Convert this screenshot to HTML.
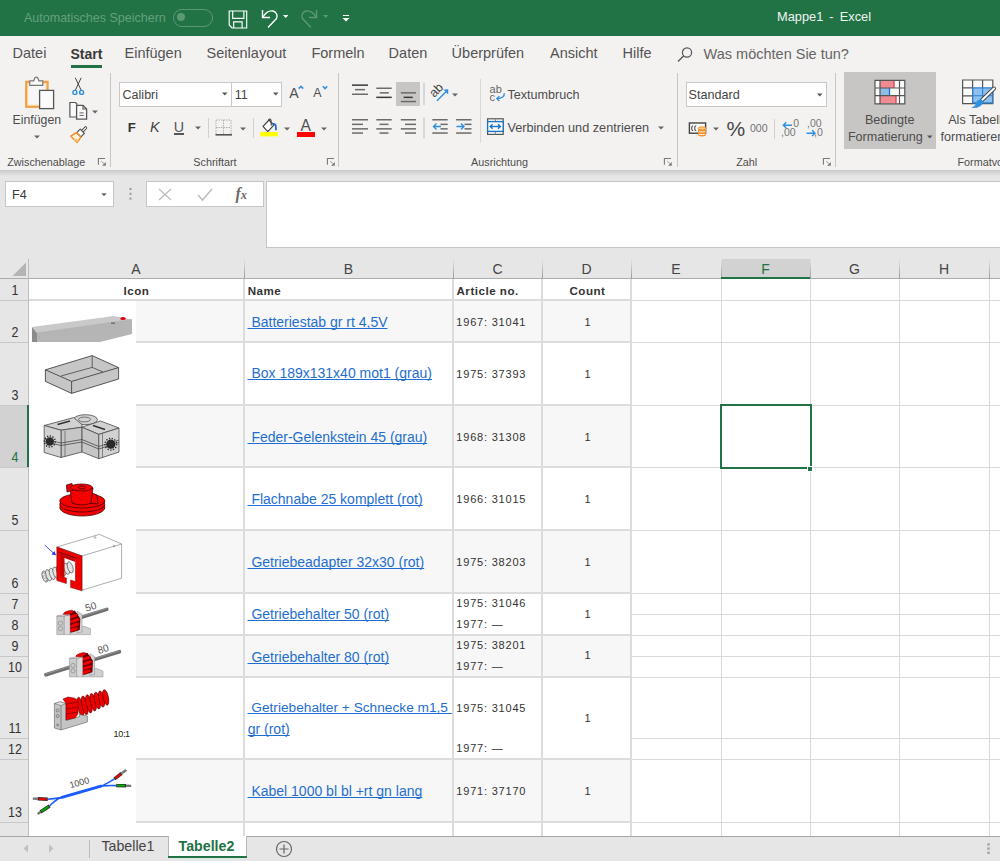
<!DOCTYPE html>
<html><head><meta charset="utf-8"><title>Excel</title>
<style>
html,body{margin:0;padding:0;}
body{width:1000px;height:861px;overflow:hidden;position:relative;background:#fff;font-family:'Liberation Sans', sans-serif;}
.t{position:absolute;white-space:nowrap;font-family:'Liberation Sans', sans-serif;}
svg{overflow:visible}
</style></head><body>
<div style="position:absolute;left:0px;top:0px;width:1000px;height:36px;background:#217346"></div><div class="t" style="left:24px;top:11.92px;font-size:12.5px;line-height:12.5px;color:#64a07c;font-weight:normal;letter-spacing:0px;">Automatisches Speichern</div><div style="position:absolute;left:173px;top:8.5px;width:38px;height:16px;border:1px solid #5d9876;border-radius:9px"></div><div style="position:absolute;left:177px;top:13px;width:8px;height:8px;background:#5d9876;border-radius:50%"></div><svg style="position:absolute;left:228px;top:10px" width="20" height="20" viewBox="0 0 20 20"><path d="M1.2 1H18.7V18H4L1.2 15Z" fill="none" stroke="#fff" stroke-width="1.15"/><path d="M4.7 1V8.3H15.9V1" fill="none" stroke="#fff" stroke-width="1.15"/><path d="M5.7 18V11.8H14.1V18" fill="none" stroke="#fff" stroke-width="1.15"/></svg><svg style="position:absolute;left:259px;top:8px" width="22" height="22" viewBox="0 0 22 22"><path d="M3.5 2V9.5H11" fill="none" stroke="#fff" stroke-width="1.4"/><path d="M4 9C7 4 11 2.5 14 3C17.5 4 19 7.5 17.5 10.5L9 19.5" fill="none" stroke="#fff" stroke-width="1.4"/></svg><svg style="position:absolute;left:283.4px;top:15px" width="6" height="4" viewBox="0 0 6 4"><path d="M0 0h5.4l-2.7 3z" fill="#fff"/></svg><svg style="position:absolute;left:298px;top:8px" width="22" height="22" viewBox="0 0 22 22"><path d="M18.5 2V9.5H11" fill="none" stroke="#5d9876" stroke-width="1.4"/><path d="M18 9C15 4 11 2.5 8 3C4.5 4 3 7.5 4.5 10.5L13 19.5" fill="none" stroke="#5d9876" stroke-width="1.4"/></svg><svg style="position:absolute;left:322.5px;top:15px" width="6" height="4" viewBox="0 0 6 4"><path d="M0 0h5.4l-2.7 3z" fill="#5d9876"/></svg><svg style="position:absolute;left:342px;top:14px" width="8" height="8" viewBox="0 0 8 8"><path d="M1 1.5h6" stroke="#fff" stroke-width="1"/><path d="M0.5 4h7l-3.5 3.5z" fill="#fff"/></svg><div class="t" style="left:777px;top:10.86px;font-size:12.8px;line-height:12.8px;color:#eef4f0;font-weight:normal;letter-spacing:0px;word-spacing:-0.5px">Mappe1 &nbsp;-&nbsp; Excel</div><div style="position:absolute;left:0px;top:36px;width:1000px;height:134px;background:#f3f2f1"></div><div class="t" style="left:12.5px;top:46.23px;font-size:14.5px;line-height:14.5px;color:#535353;font-weight:normal;letter-spacing:0px;">Datei</div><div class="t" style="left:70.5px;top:46.65px;font-size:14px;line-height:14px;color:#3a3a3a;font-weight:bold;letter-spacing:0px;">Start</div><div class="t" style="left:124.5px;top:46.23px;font-size:14.5px;line-height:14.5px;color:#535353;font-weight:normal;letter-spacing:0px;">Einfügen</div><div class="t" style="left:206.5px;top:46.23px;font-size:14.5px;line-height:14.5px;color:#535353;font-weight:normal;letter-spacing:0px;">Seitenlayout</div><div class="t" style="left:311.4px;top:46.23px;font-size:14.5px;line-height:14.5px;color:#535353;font-weight:normal;letter-spacing:0px;">Formeln</div><div class="t" style="left:388.6px;top:46.23px;font-size:14.5px;line-height:14.5px;color:#535353;font-weight:normal;letter-spacing:0px;">Daten</div><div class="t" style="left:451.6px;top:46.23px;font-size:14.5px;line-height:14.5px;color:#535353;font-weight:normal;letter-spacing:0px;">Überprüfen</div><div class="t" style="left:550px;top:46.23px;font-size:14.5px;line-height:14.5px;color:#535353;font-weight:normal;letter-spacing:0px;">Ansicht</div><div class="t" style="left:622.5px;top:46.23px;font-size:14.5px;line-height:14.5px;color:#535353;font-weight:normal;letter-spacing:0px;">Hilfe</div><div style="position:absolute;left:70.5px;top:64.5px;width:31.5px;height:3px;background:#217346"></div><svg style="position:absolute;left:677px;top:47px" width="16" height="15" viewBox="0 0 16 15"><circle cx="10" cy="5.5" r="4.6" fill="none" stroke="#555" stroke-width="1.2"/><path d="M6.8 8.8 L1 14.5" stroke="#555" stroke-width="1.3"/></svg><div class="t" style="left:703.6px;top:46.53px;font-size:14.5px;line-height:14.5px;color:#656565;font-weight:normal;letter-spacing:0px;">Was möchten Sie tun?</div><div style="position:absolute;left:110px;top:73px;width:1px;height:94px;background:#c8c6c4"></div><div style="position:absolute;left:338px;top:73px;width:1px;height:94px;background:#c8c6c4"></div><div style="position:absolute;left:676.5px;top:73px;width:1px;height:94px;background:#c8c6c4"></div><div style="position:absolute;left:834.5px;top:73px;width:1px;height:94px;background:#c8c6c4"></div><div class="t" style="left:7.2px;top:156.96px;font-size:10.8px;line-height:10.8px;color:#4d4d4d;font-weight:normal;letter-spacing:0px;">Zwischenablage</div><div class="t" style="left:193.3px;top:156.96px;font-size:10.8px;line-height:10.8px;color:#4d4d4d;font-weight:normal;letter-spacing:0px;">Schriftart</div><div class="t" style="left:471.1px;top:156.96px;font-size:10.8px;line-height:10.8px;color:#4d4d4d;font-weight:normal;letter-spacing:0px;">Ausrichtung</div><div class="t" style="left:736.2px;top:156.96px;font-size:10.8px;line-height:10.8px;color:#4d4d4d;font-weight:normal;letter-spacing:0px;">Zahl</div><div class="t" style="left:957.5px;top:156.96px;font-size:10.8px;line-height:10.8px;color:#4d4d4d;font-weight:normal;letter-spacing:0px;">Formatvorlagen</div><svg style="position:absolute;left:97px;top:157px" width="10" height="10" viewBox="0 0 10 10"><path d="M1.4 7.7V1.5H8" fill="none" stroke="#7a7a7a" stroke-width="1.1"/><path d="M4.4 4.2L7 6.8" stroke="#8a8a8a" stroke-width="0.9"/><path d="M8.8 5V8.7H5.1Z" fill="#7a7a7a"/></svg><svg style="position:absolute;left:325.5px;top:157px" width="10" height="10" viewBox="0 0 10 10"><path d="M1.4 7.7V1.5H8" fill="none" stroke="#7a7a7a" stroke-width="1.1"/><path d="M4.4 4.2L7 6.8" stroke="#8a8a8a" stroke-width="0.9"/><path d="M8.8 5V8.7H5.1Z" fill="#7a7a7a"/></svg><svg style="position:absolute;left:662.5px;top:157px" width="10" height="10" viewBox="0 0 10 10"><path d="M1.4 7.7V1.5H8" fill="none" stroke="#7a7a7a" stroke-width="1.1"/><path d="M4.4 4.2L7 6.8" stroke="#8a8a8a" stroke-width="0.9"/><path d="M8.8 5V8.7H5.1Z" fill="#7a7a7a"/></svg><svg style="position:absolute;left:821.5px;top:157px" width="10" height="10" viewBox="0 0 10 10"><path d="M1.4 7.7V1.5H8" fill="none" stroke="#7a7a7a" stroke-width="1.1"/><path d="M4.4 4.2L7 6.8" stroke="#8a8a8a" stroke-width="0.9"/><path d="M8.8 5V8.7H5.1Z" fill="#7a7a7a"/></svg><svg style="position:absolute;left:24px;top:76px" width="32" height="34" viewBox="0 0 32 34"><rect x="2.3" y="5.9" width="21.2" height="24.8" fill="#f7f7f7" stroke="#f2a04a" stroke-width="2.4"/><rect x="3.8" y="7.4" width="18.2" height="21.8" fill="none" stroke="#fbd98a" stroke-width="0.8"/><path d="M5.8 9.3V4.8H9.8C10.3 2.3 11 1.2 12.3 1.2S14.3 2.3 14.8 4.8H18.8V9.3Z" fill="#fafafa" stroke="#7a7a7a" stroke-width="1.2"/><rect x="15.6" y="14.4" width="14" height="18.2" fill="#fafafa" stroke="#555" stroke-width="1.3"/></svg><div class="t" style="left:12.6px;top:113.59px;font-size:12.3px;line-height:12.3px;color:#4d4d4d;font-weight:normal;letter-spacing:0px;">Einfügen</div><svg style="position:absolute;left:33.6px;top:134.6px" width="6" height="4" viewBox="0 0 6 4"><path d="M0 0.5h6l-3.0 3z" fill="#666"/></svg><svg style="position:absolute;left:71px;top:77px" width="16" height="19" viewBox="0 0 16 19"><path d="M4.3 0.8L10.2 13.3M10.2 0.8L4.3 13.3" fill="none" stroke="#444" stroke-width="1"/><circle cx="3.9" cy="15.4" r="2" fill="none" stroke="#2f8fdf" stroke-width="1.4"/><circle cx="10.6" cy="15.4" r="2" fill="none" stroke="#2f8fdf" stroke-width="1.4"/></svg><svg style="position:absolute;left:69px;top:101px" width="20" height="20" viewBox="0 0 20 20"><path d="M0.9 1.5H6.5L7.8 2.8V16H0.9Z" fill="#fafafa" stroke="#555" stroke-width="1.2"/><path d="M7.6 4.4H14L17.6 8V18.2H7.6Z" fill="#fafafa" stroke="#555" stroke-width="1.3"/><path d="M14 4.4V8H17.6" fill="none" stroke="#555" stroke-width="1.1"/><path d="M10.5 11.9H14.7M10.5 14.4H14.7" stroke="#666" stroke-width="1"/></svg><svg style="position:absolute;left:92.4px;top:110.4px" width="6" height="4" viewBox="0 0 6 4"><path d="M0 0.5h6l-3.0 3z" fill="#666"/></svg><svg style="position:absolute;left:69px;top:126px" width="20" height="19" viewBox="0 0 20 19"><path d="M16.6 1.8L13.2 5.4" stroke="#555" stroke-width="3.2" stroke-linecap="round"/><path d="M16.6 1.8L13.2 5.4" stroke="#fafafa" stroke-width="1.2" stroke-linecap="round"/><polygon points="11.2,3.1 15.4,7.3 11.9,10.8 7.7,6.6" fill="#fafafa" stroke="#555" stroke-width="1.2" stroke-linejoin="round"/><polygon points="7.3,6.6 11.9,11.2 8.2,16.6 1.8,10.2" fill="#fdf3e0" stroke="#f08a24" stroke-width="1.4" stroke-linejoin="round"/><polygon points="4.5,13.2 8.2,16.6 9.8,14.2 6.5,12.5" fill="#f6c56a"/></svg><div style="position:absolute;left:119.4px;top:82px;width:163px;height:24.5px;background:#fff;border:1px solid #c8c8c8;box-sizing:border-box"></div><div style="position:absolute;left:230.5px;top:82px;width:1px;height:24.5px;background:#c8c8c8"></div><div class="t" style="left:122.6px;top:89.02px;font-size:12.5px;line-height:12.5px;color:#444;font-weight:normal;letter-spacing:0px;">Calibri</div><svg style="position:absolute;left:221.55px;top:92.4px" width="5.5" height="4" viewBox="0 0 5.5 4"><path d="M0 0.5h5.5l-2.75 3z" fill="#555"/></svg><div class="t" style="left:234.7px;top:89.02px;font-size:12.5px;line-height:12.5px;color:#444;font-weight:normal;letter-spacing:0px;">11</div><svg style="position:absolute;left:272.95px;top:92.4px" width="5.5" height="4" viewBox="0 0 5.5 4"><path d="M0 0.5h5.5l-2.75 3z" fill="#555"/></svg><div class="t" style="left:289.2px;top:85.78px;font-size:14.2px;line-height:14.2px;color:#505050;font-weight:normal;letter-spacing:0px;">A</div><svg style="position:absolute;left:297.6px;top:85.2px" width="7" height="5" viewBox="0 0 7 5"><path d="M0.8 3.6L3 1.3L5.2 3.6" fill="none" stroke="#2f8fdf" stroke-width="1.6"/></svg><div class="t" style="left:313.3px;top:87.30px;font-size:12.4px;line-height:12.4px;color:#505050;font-weight:normal;letter-spacing:0px;">A</div><svg style="position:absolute;left:321.6px;top:85.2px" width="7" height="5" viewBox="0 0 7 5"><path d="M0.8 1.3L3 3.6L5.2 1.3" fill="none" stroke="#2f8fdf" stroke-width="1.6"/></svg><div class="t" style="left:127.7px;top:120.63px;font-size:13.2px;line-height:13.2px;color:#333;font-weight:bold;letter-spacing:0px;">F</div><div class="t" style="left:150px;top:119.53px;font-size:14.5px;line-height:14.5px;color:#444;font-weight:normal;letter-spacing:0px;"><i>K</i></div><div class="t" style="left:173.8px;top:119.70px;font-size:14.3px;line-height:14.3px;color:#555;font-weight:normal;letter-spacing:0px;">U</div><div style="position:absolute;left:174px;top:133.2px;width:9.8px;height:1.6px;background:#555"></div><svg style="position:absolute;left:194.6px;top:126.19999999999999px" width="6" height="4" viewBox="0 0 6 4"><path d="M0 0.5h6l-3.0 3z" fill="#666"/></svg><div style="position:absolute;left:208.4px;top:118px;width:1px;height:20.4px;background:#d0d0d0"></div><svg style="position:absolute;left:215px;top:119px" width="18" height="18" viewBox="0 0 18 18"><path d="M1 1h15v15M1 1v15M8.5 1v14M1 8.5h15" fill="none" stroke="#b0b0b0" stroke-width="1" stroke-dasharray="1.5 1"/><rect x="0.5" y="15" width="16.5" height="1.6" fill="#555"/></svg><svg style="position:absolute;left:239.5px;top:126.5px" width="6" height="4" viewBox="0 0 6 4"><path d="M0 0.5h6l-3.0 3z" fill="#666"/></svg><div style="position:absolute;left:252.9px;top:118px;width:1px;height:20.4px;background:#d0d0d0"></div><svg style="position:absolute;left:259px;top:118px" width="20" height="20" viewBox="0 0 20 20"><path d="M4 8.4L10 2L14.8 7.2L8.8 13.6Z" fill="#fafafa" stroke="#444" stroke-width="1.2" stroke-linejoin="round"/><path d="M9.6 2.6C9.4 0.9 11.6 0.4 12 2.2L12.3 7.6" fill="none" stroke="#444" stroke-width="1.1"/><path d="M13.8 6.2C15.6 5.6 16.9 6.6 16.9 9.2V12.2" fill="none" stroke="#1f6fd0" stroke-width="1.8"/><rect x="1.2" y="14" width="17.6" height="4.4" fill="#ffff00"/></svg><svg style="position:absolute;left:283.7px;top:126.5px" width="6" height="4" viewBox="0 0 6 4"><path d="M0 0.5h6l-3.0 3z" fill="#666"/></svg><div class="t" style="left:300.6px;top:117.99px;font-size:15.6px;line-height:15.6px;color:#505050;font-weight:normal;letter-spacing:0px;">A</div><div style="position:absolute;left:297px;top:132px;width:17.6px;height:4.8px;background:#ff0000"></div><svg style="position:absolute;left:320.8px;top:126.5px" width="6" height="4" viewBox="0 0 6 4"><path d="M0 0.5h6l-3.0 3z" fill="#666"/></svg><div style="position:absolute;left:395.9px;top:82.3px;width:23.8px;height:23.4px;background:#c8c6c4"></div><svg style="position:absolute;left:340px;top:76px" width="100" height="40" viewBox="0 0 100 40"><rect x="12" y="8.4" width="16.0" height="1.5" fill="#3a3a3a"/><rect x="15" y="12.9" width="10.0" height="1.5" fill="#6b6b6b"/><rect x="12" y="17.5" width="16.0" height="1.5" fill="#6b6b6b"/><rect x="36.30000000000001" y="11.5" width="15.4" height="1.5" fill="#6b6b6b"/><rect x="39.80000000000001" y="16.1" width="9.1" height="1.5" fill="#6b6b6b"/><rect x="36.30000000000001" y="20.6" width="15.4" height="1.5" fill="#3a3a3a"/><rect x="60.80000000000001" y="16.1" width="15.2" height="1.5" fill="#6b6b6b"/><rect x="63.60000000000002" y="20.6" width="9.1" height="1.5" fill="#3a3a3a"/><rect x="60.80000000000001" y="24.8" width="15.2" height="1.5" fill="#6b6b6b"/></svg><div style="position:absolute;left:423.3px;top:83.3px;width:1.5px;height:21.5px;background:#d6d6d6"></div><div class="t" style="left:430.3px;top:83.8px;font-size:12.6px;line-height:13px;color:#444;transform:rotate(-45deg);transform-origin:7px 7px">ab</div><svg style="position:absolute;left:432px;top:85px" width="18" height="17" viewBox="0 0 18 17"><path d="M5 15.8L14 6.8" stroke="#2f8fdf" stroke-width="1.4"/><polygon points="11.4,4.4 16.3,4.3 16.2,9.4" fill="#2f8fdf"/></svg><svg style="position:absolute;left:451.5px;top:92.5px" width="6" height="4" viewBox="0 0 6 4"><path d="M0 0.5h6l-3.0 3z" fill="#666"/></svg><svg style="position:absolute;left:340px;top:110px" width="140" height="30" viewBox="0 0 140 30"><rect x="12.0" y="9.0" width="16.0" height="1.5" fill="#6b6b6b"/><rect x="12.0" y="13.6" width="11.0" height="1.5" fill="#6b6b6b"/><rect x="12.0" y="18.1" width="16.0" height="1.5" fill="#6b6b6b"/><rect x="12.0" y="22.3" width="11.0" height="1.5" fill="#6b6b6b"/><rect x="36.3" y="9.0" width="15.4" height="1.5" fill="#6b6b6b"/><rect x="39.5" y="13.6" width="9.0" height="1.5" fill="#6b6b6b"/><rect x="36.3" y="18.1" width="15.4" height="1.5" fill="#6b6b6b"/><rect x="39.5" y="22.3" width="9.0" height="1.5" fill="#6b6b6b"/><rect x="60.8" y="9.0" width="15.2" height="1.5" fill="#6b6b6b"/><rect x="65.0" y="13.6" width="11.0" height="1.5" fill="#6b6b6b"/><rect x="60.8" y="18.1" width="15.2" height="1.5" fill="#6b6b6b"/><rect x="65.0" y="22.3" width="11.0" height="1.5" fill="#6b6b6b"/><rect x="92.3" y="9.0" width="15.4" height="1.5" fill="#6b6b6b"/><rect x="100.5" y="13.6" width="7.2" height="1.5" fill="#6b6b6b"/><rect x="100.5" y="18.1" width="7.2" height="1.5" fill="#6b6b6b"/><rect x="92.3" y="22.3" width="15.4" height="1.5" fill="#6b6b6b"/><rect x="116.1" y="9.0" width="15.4" height="1.5" fill="#6b6b6b"/><rect x="124.5" y="13.6" width="7.0" height="1.5" fill="#6b6b6b"/><rect x="124.5" y="18.1" width="7.0" height="1.5" fill="#6b6b6b"/><rect x="116.1" y="22.3" width="15.4" height="1.5" fill="#6b6b6b"/></svg><div style="position:absolute;left:423.3px;top:117.6px;width:1.5px;height:20.8px;background:#d6d6d6"></div><svg style="position:absolute;left:432px;top:122px" width="10" height="9" viewBox="0 0 10 9"><path d="M9 4.5H1.5M4.5 1.5l-3 3 3 3" fill="none" stroke="#2f8fdf" stroke-width="1.4"/></svg><svg style="position:absolute;left:456px;top:122px" width="10" height="9" viewBox="0 0 10 9"><path d="M0.5 4.5H8M5 1.5l3 3-3 3" fill="none" stroke="#2f8fdf" stroke-width="1.4"/></svg><div style="position:absolute;left:479.5px;top:78.8px;width:1px;height:63.8px;background:#d8d8d8"></div><div class="t" style="left:489.6px;top:83.69px;font-size:11px;line-height:11px;color:#666;font-weight:normal;letter-spacing:0px;">ab</div><div class="t" style="left:489.6px;top:91.89px;font-size:11px;line-height:11px;color:#666;font-weight:normal;letter-spacing:0px;">c</div><svg style="position:absolute;left:495px;top:92px" width="11" height="10" viewBox="0 0 11 10"><path d="M9.2 1.2C9.8 4.5 7 6.5 2 6.6" fill="none" stroke="#2f8fdf" stroke-width="1.3"/><path d="M4.4 4.2L1.8 6.6 4.4 9" fill="none" stroke="#2f8fdf" stroke-width="1.3"/></svg><div class="t" style="left:507.4px;top:88.63px;font-size:12.6px;line-height:12.6px;color:#4d4d4d;font-weight:normal;letter-spacing:0px;">Textumbruch</div><svg style="position:absolute;left:487px;top:118px" width="17" height="17" viewBox="0 0 17 17"><rect x="0.6" y="0.8" width="15.6" height="15.6" fill="#fafafa" stroke="#555" stroke-width="1.2"/><path d="M8.4 0.8V3.4M8.4 13.5V16.4" stroke="#888" stroke-width="1"/><rect x="0.6" y="3.6" width="15.6" height="9.8" fill="#fff" stroke="#1f73c6" stroke-width="1.4"/><path d="M3.2 8.5H13.4M5.6 6.2L3.2 8.5 5.6 10.8M11 6.2L13.4 8.5 11 10.8" fill="none" stroke="#1f73c6" stroke-width="1.4"/></svg><div class="t" style="left:507.4px;top:121.65px;font-size:12.7px;line-height:12.7px;color:#4d4d4d;font-weight:normal;letter-spacing:0px;">Verbinden und zentrieren</div><svg style="position:absolute;left:658.4px;top:125.6px" width="6" height="4" viewBox="0 0 6 4"><path d="M0 0.5h6l-3.0 3z" fill="#666"/></svg><div style="position:absolute;left:685.5px;top:82.2px;width:141px;height:24.4px;background:#fff;border:1px solid #c8c8c8;box-sizing:border-box"></div><div class="t" style="left:688.6px;top:89.13px;font-size:12.6px;line-height:12.6px;color:#444;font-weight:normal;letter-spacing:0px;">Standard</div><svg style="position:absolute;left:816.85px;top:93.2px" width="5.5" height="4" viewBox="0 0 5.5 4"><path d="M0 0.5h5.5l-2.75 3z" fill="#555"/></svg><svg style="position:absolute;left:688px;top:122px" width="20" height="16" viewBox="0 0 20 16"><rect x="1.4" y="1" width="16.2" height="10.2" fill="#fafafa" stroke="#444" stroke-width="1.4"/><path d="M5.2 3.8C3.2 3.8 3.2 8.6 5.2 8.6M8.2 3.8C6.2 3.8 6.2 8.6 8.2 8.6" fill="none" stroke="#555" stroke-width="1.1"/><path d="M10 6.4V12.6C10 13.8 11.8 14.5 14 14.5S18 13.8 18 12.6V6.4Z" fill="#f08a24"/><ellipse cx="14" cy="6.4" rx="4" ry="1.6" fill="#f6c87a" stroke="#f08a24" stroke-width="0.8"/><path d="M10.8 9.4C11.5 10.2 16.5 10.2 17.2 9.4M10.8 12C11.5 12.8 16.5 12.8 17.2 12" fill="none" stroke="#fff" stroke-width="0.9"/></svg><svg style="position:absolute;left:712.5px;top:126.69999999999999px" width="6" height="4" viewBox="0 0 6 4"><path d="M0 0.5h6l-3.0 3z" fill="#666"/></svg><div class="t" style="left:726.6px;top:117.82px;font-size:21px;line-height:21px;color:#474747;font-weight:normal;letter-spacing:0px;">%</div><div class="t" style="left:749.9px;top:123.13px;font-size:10.6px;line-height:10.6px;color:#737373;font-weight:normal;letter-spacing:0px;">000</div><div style="position:absolute;left:773.8px;top:118.5px;width:1.2px;height:20.4px;background:#d0d0d0"></div><div class="t" style="left:789px;top:119px;font-size:10.5px;line-height:8px;color:#777;text-align:right;width:10px">0</div><div class="t" style="left:781px;top:128px;font-size:10.5px;line-height:8px;color:#777">,00</div><svg style="position:absolute;left:781.5px;top:120.5px" width="11" height="8" viewBox="0 0 11 8"><path d="M10 4.2H1.5M4.2 1.3L1.3 4.2 4.2 7.1" fill="none" stroke="#2f8fdf" stroke-width="1.4"/></svg><div class="t" style="left:807px;top:119px;font-size:10.5px;line-height:8px;color:#777">,00</div><div class="t" style="left:814px;top:128px;font-size:10.5px;line-height:8px;color:#777">,0</div><svg style="position:absolute;left:805.8px;top:128.5px" width="11" height="8" viewBox="0 0 11 8"><path d="M0.5 4.2H9M6.1 1.3L9 4.2 6.1 7.1" fill="none" stroke="#2f8fdf" stroke-width="1.4"/></svg><div style="position:absolute;left:843.6px;top:72.1px;width:92.7px;height:77.1px;background:#c8c6c4"></div><svg style="position:absolute;left:874px;top:79px" width="32" height="26" viewBox="0 0 32 26"><rect x="1" y="1.3" width="29.8" height="23.5" fill="#fafafa"/><rect x="6" y="1.3" width="14" height="7.7" fill="#f28a93"/><rect x="6" y="16.6" width="16" height="7.7" fill="#f28a93"/><rect x="6" y="9" width="9.5" height="7.6" fill="#8fbde8"/><path d="M20 1.3v7.7M22 16.6v7.7" stroke="#e04050" stroke-width="1.3"/><path d="M15.5 9v7.6" stroke="#1f6fd0" stroke-width="1.3"/><path d="M1 1.3h29.8v23.5H1zM1 9h29.8M1 16.6h29.8M6 1.3v23.5M25.5 1.3v23.5" fill="none" stroke="#555" stroke-width="1.2"/></svg><div class="t" style="left:864.9px;top:113.83px;font-size:12.6px;line-height:12.6px;color:#4d4d4d;font-weight:normal;letter-spacing:0px;">Bedingte</div><div class="t" style="left:847.9px;top:130.83px;font-size:12.6px;line-height:12.6px;color:#4d4d4d;font-weight:normal;letter-spacing:0px;">Formatierung</div><svg style="position:absolute;left:926.75px;top:135.3px" width="5.5" height="4" viewBox="0 0 5.5 4"><path d="M0 0.5h5.5l-2.75 3z" fill="#555"/></svg><svg style="position:absolute;left:962px;top:79px" width="38" height="31" viewBox="0 0 38 31"><rect x="0.6" y="1" width="30.2" height="23.7" fill="#fafafa"/><rect x="10.6" y="8.9" width="20.2" height="15" fill="#8cc0ee"/><path d="M0.6 1h30.2v23.7H0.6zM0.6 8.9h10M0.6 16.8h10M10.6 1v23.7M20.6 1v7.9M10.6 1h20.2" fill="none" stroke="#555" stroke-width="1.2"/><path d="M10.6 8.9h20.2v15H10.6zM10.6 16.8h20.2M20.6 8.9v15" fill="none" stroke="#2f7fd0" stroke-width="1.1"/><path d="M32 9.5L19.8 21.2" stroke="#444" stroke-width="4" stroke-linecap="round"/><path d="M32 9.5L19.8 21.2" stroke="#fafafa" stroke-width="2.2" stroke-linecap="round"/><path d="M19.5 20.2C16 20.2 13.6 23 13.2 26.2C12 27.4 10.5 28.3 8.8 28.6C13.5 29.6 19.5 28.6 21.3 23Z" fill="#2f8fdf"/></svg><div class="t" style="left:948.2px;top:113.83px;font-size:12.6px;line-height:12.6px;color:#4d4d4d;font-weight:normal;letter-spacing:0px;">Als Tabelle</div><div class="t" style="left:940.5px;top:130.83px;font-size:12.6px;line-height:12.6px;color:#4d4d4d;font-weight:normal;letter-spacing:0px;">formatieren</div><div style="position:absolute;left:0px;top:170px;width:1000px;height:6px;background:linear-gradient(#c9c9c9,#e6e6e6)"></div><div style="position:absolute;left:0px;top:176px;width:1000px;height:83px;background:#e6e6e6"></div><div style="position:absolute;left:5px;top:181px;width:109px;height:25.5px;background:#fff;border:1px solid #c6c6c6;box-sizing:border-box"></div><div class="t" style="left:12px;top:188.73px;font-size:12.6px;line-height:12.6px;color:#3a3a3a;font-weight:normal;letter-spacing:0px;">F4</div><svg style="position:absolute;left:100.5px;top:192.5px" width="7" height="4" viewBox="0 0 7 4"><path d="M0.3 0.3h5.4l-2.7 3z" fill="#666"/></svg><svg style="position:absolute;left:128.5px;top:187px" width="4" height="14" viewBox="0 0 4 14"><rect x="0.5" y="1" width="2" height="2" fill="#999"/><rect x="0.5" y="5.8" width="2" height="2" fill="#999"/><rect x="0.5" y="10.6" width="2" height="2" fill="#999"/></svg><div style="position:absolute;left:146px;top:181px;width:118px;height:26px;background:#fff;border:1px solid #c6c6c6;box-sizing:border-box"></div><svg style="position:absolute;left:158px;top:188px" width="14" height="13" viewBox="0 0 14 13"><path d="M1 1L13 12M13 1L1 12" stroke="#bdbdbd" stroke-width="1.3"/></svg><svg style="position:absolute;left:197px;top:188px" width="16" height="13" viewBox="0 0 16 13"><path d="M1 7l4.5 5L15 1" fill="none" stroke="#bdbdbd" stroke-width="1.5"/></svg><div class="t" style="left:235.5px;top:186.46px;font-size:16px;line-height:16px;color:#6a6a6a;font-weight:normal;letter-spacing:0px;"><i style="font-family:Liberation Serif;font-weight:bold">f</i><i style="font-family:Liberation Serif;font-size:12.5px;font-weight:bold">x</i></div><div style="position:absolute;left:266px;top:181px;width:740px;height:67px;background:#fff;border:1px solid #c6c6c6;box-sizing:border-box"></div><div style="position:absolute;left:0px;top:259px;width:1000px;height:577px;background:#fff"></div><div style="position:absolute;left:0px;top:259px;width:1000px;height:19px;background:#e6e6e6"></div><div style="position:absolute;left:0px;top:259px;width:28px;height:577px;background:#e6e6e6"></div><div style="position:absolute;left:721px;top:259px;width:89px;height:19px;background:#d2d2d2"></div><div style="position:absolute;left:0px;top:405px;width:28px;height:62px;background:#d2d2d2"></div><div style="position:absolute;left:29px;top:301px;width:602px;height:41px;background:#f7f7f7"></div><div style="position:absolute;left:29px;top:406px;width:602px;height:61px;background:#f7f7f7"></div><div style="position:absolute;left:29px;top:531px;width:602px;height:62px;background:#f7f7f7"></div><div style="position:absolute;left:29px;top:636px;width:602px;height:41px;background:#f7f7f7"></div><div style="position:absolute;left:29px;top:760px;width:602px;height:62px;background:#f7f7f7"></div><div style="position:absolute;left:721px;top:279px;width:1px;height:557px;background:#dadada"></div><div style="position:absolute;left:810px;top:279px;width:1px;height:557px;background:#dadada"></div><div style="position:absolute;left:899px;top:279px;width:1px;height:557px;background:#dadada"></div><div style="position:absolute;left:989px;top:279px;width:1px;height:557px;background:#dadada"></div><div style="position:absolute;left:632px;top:300px;width:368px;height:1px;background:#dadada"></div><div style="position:absolute;left:632px;top:342px;width:368px;height:1px;background:#dadada"></div><div style="position:absolute;left:632px;top:405px;width:368px;height:1px;background:#dadada"></div><div style="position:absolute;left:632px;top:467px;width:368px;height:1px;background:#dadada"></div><div style="position:absolute;left:632px;top:530px;width:368px;height:1px;background:#dadada"></div><div style="position:absolute;left:632px;top:593px;width:368px;height:1px;background:#dadada"></div><div style="position:absolute;left:632px;top:614px;width:368px;height:1px;background:#dadada"></div><div style="position:absolute;left:632px;top:635px;width:368px;height:1px;background:#dadada"></div><div style="position:absolute;left:632px;top:656px;width:368px;height:1px;background:#dadada"></div><div style="position:absolute;left:632px;top:677px;width:368px;height:1px;background:#dadada"></div><div style="position:absolute;left:632px;top:738px;width:368px;height:1px;background:#dadada"></div><div style="position:absolute;left:632px;top:759px;width:368px;height:1px;background:#dadada"></div><div style="position:absolute;left:632px;top:822px;width:368px;height:1px;background:#dadada"></div><div style="position:absolute;left:0px;top:300px;width:28px;height:1px;background:#c8c8c8"></div><div style="position:absolute;left:0px;top:342px;width:28px;height:1px;background:#c8c8c8"></div><div style="position:absolute;left:0px;top:405px;width:28px;height:1px;background:#c8c8c8"></div><div style="position:absolute;left:0px;top:467px;width:28px;height:1px;background:#c8c8c8"></div><div style="position:absolute;left:0px;top:530px;width:28px;height:1px;background:#c8c8c8"></div><div style="position:absolute;left:0px;top:593px;width:28px;height:1px;background:#c8c8c8"></div><div style="position:absolute;left:0px;top:614px;width:28px;height:1px;background:#c8c8c8"></div><div style="position:absolute;left:0px;top:635px;width:28px;height:1px;background:#c8c8c8"></div><div style="position:absolute;left:0px;top:656px;width:28px;height:1px;background:#c8c8c8"></div><div style="position:absolute;left:0px;top:677px;width:28px;height:1px;background:#c8c8c8"></div><div style="position:absolute;left:0px;top:738px;width:28px;height:1px;background:#c8c8c8"></div><div style="position:absolute;left:0px;top:759px;width:28px;height:1px;background:#c8c8c8"></div><div style="position:absolute;left:0px;top:822px;width:28px;height:1px;background:#c8c8c8"></div><div style="position:absolute;left:244px;top:259px;width:1px;height:19px;background:linear-gradient(#e6e6e6,#9a9a9a)"></div><div style="position:absolute;left:453px;top:259px;width:1px;height:19px;background:linear-gradient(#e6e6e6,#9a9a9a)"></div><div style="position:absolute;left:542px;top:259px;width:1px;height:19px;background:linear-gradient(#e6e6e6,#9a9a9a)"></div><div style="position:absolute;left:631px;top:259px;width:1px;height:19px;background:linear-gradient(#e6e6e6,#9a9a9a)"></div><div style="position:absolute;left:721px;top:259px;width:1px;height:19px;background:linear-gradient(#e6e6e6,#9a9a9a)"></div><div style="position:absolute;left:810px;top:259px;width:1px;height:19px;background:linear-gradient(#e6e6e6,#9a9a9a)"></div><div style="position:absolute;left:899px;top:259px;width:1px;height:19px;background:linear-gradient(#e6e6e6,#9a9a9a)"></div><div style="position:absolute;left:989px;top:259px;width:1px;height:19px;background:linear-gradient(#e6e6e6,#9a9a9a)"></div><div style="position:absolute;left:29px;top:299px;width:603px;height:2px;background:#dcdcdc"></div><div style="position:absolute;left:29px;top:341px;width:603px;height:2px;background:#dcdcdc"></div><div style="position:absolute;left:29px;top:404px;width:603px;height:2px;background:#dcdcdc"></div><div style="position:absolute;left:29px;top:466px;width:603px;height:2px;background:#dcdcdc"></div><div style="position:absolute;left:29px;top:529px;width:603px;height:2px;background:#dcdcdc"></div><div style="position:absolute;left:29px;top:592px;width:603px;height:2px;background:#dcdcdc"></div><div style="position:absolute;left:29px;top:634px;width:603px;height:2px;background:#dcdcdc"></div><div style="position:absolute;left:29px;top:676px;width:603px;height:2px;background:#dcdcdc"></div><div style="position:absolute;left:29px;top:758px;width:603px;height:2px;background:#dcdcdc"></div><div style="position:absolute;left:29px;top:821px;width:603px;height:2px;background:#dcdcdc"></div><div style="position:absolute;left:243px;top:279px;width:2px;height:557px;background:#dcdcdc"></div><div style="position:absolute;left:452px;top:279px;width:2px;height:557px;background:#dcdcdc"></div><div style="position:absolute;left:541px;top:279px;width:2px;height:557px;background:#dcdcdc"></div><div style="position:absolute;left:630px;top:279px;width:2px;height:557px;background:#dcdcdc"></div><div style="position:absolute;left:0px;top:278px;width:1000px;height:1px;background:#ababab"></div><div style="position:absolute;left:28px;top:259px;width:1px;height:577px;background:#bdbdbd"></div><svg style="position:absolute;left:12px;top:262px" width="15" height="15" viewBox="0 0 15 15"><path d="M14 0.5V14H0.5Z" fill="#b4b4b4"/></svg><div style="position:absolute;left:721px;top:277px;width:89px;height:2px;background:#217346"></div><div style="position:absolute;left:27px;top:405px;width:2px;height:62px;background:#217346"></div><div class="t" style="left:28px;width:216px;text-align:center;top:262.05px;font-size:14px;line-height:14px;color:#444">A</div><div class="t" style="left:244px;width:209px;text-align:center;top:262.05px;font-size:14px;line-height:14px;color:#444">B</div><div class="t" style="left:453px;width:89px;text-align:center;top:262.05px;font-size:14px;line-height:14px;color:#444">C</div><div class="t" style="left:542px;width:89px;text-align:center;top:262.05px;font-size:14px;line-height:14px;color:#444">D</div><div class="t" style="left:631px;width:90px;text-align:center;top:262.05px;font-size:14px;line-height:14px;color:#444">E</div><div class="t" style="left:721px;width:89px;text-align:center;top:262.05px;font-size:14px;line-height:14px;color:#217346">F</div><div class="t" style="left:810px;width:89px;text-align:center;top:262.05px;font-size:14px;line-height:14px;color:#444">G</div><div class="t" style="left:899px;width:90px;text-align:center;top:262.05px;font-size:14px;line-height:14px;color:#444">H</div><div class="t" style="left:0.5px;width:28px;text-align:center;top:282.7px;font-size:14.5px;line-height:14.5px;color:#333;transform:scaleX(0.86)">1</div><div class="t" style="left:0.5px;width:28px;text-align:center;top:324.7px;font-size:14.5px;line-height:14.5px;color:#333;transform:scaleX(0.86)">2</div><div class="t" style="left:0.5px;width:28px;text-align:center;top:387.7px;font-size:14.5px;line-height:14.5px;color:#333;transform:scaleX(0.86)">3</div><div class="t" style="left:0.5px;width:28px;text-align:center;top:449.7px;font-size:14.5px;line-height:14.5px;color:#217346;transform:scaleX(0.86)">4</div><div class="t" style="left:0.5px;width:28px;text-align:center;top:512.7px;font-size:14.5px;line-height:14.5px;color:#333;transform:scaleX(0.86)">5</div><div class="t" style="left:0.5px;width:28px;text-align:center;top:575.7px;font-size:14.5px;line-height:14.5px;color:#333;transform:scaleX(0.86)">6</div><div class="t" style="left:0.5px;width:28px;text-align:center;top:596.7px;font-size:14.5px;line-height:14.5px;color:#333;transform:scaleX(0.86)">7</div><div class="t" style="left:0.5px;width:28px;text-align:center;top:617.7px;font-size:14.5px;line-height:14.5px;color:#333;transform:scaleX(0.86)">8</div><div class="t" style="left:0.5px;width:28px;text-align:center;top:638.7px;font-size:14.5px;line-height:14.5px;color:#333;transform:scaleX(0.86)">9</div><div class="t" style="left:0.5px;width:28px;text-align:center;top:659.7px;font-size:14.5px;line-height:14.5px;color:#333;transform:scaleX(0.86)">10</div><div class="t" style="left:0.5px;width:28px;text-align:center;top:720.7px;font-size:14.5px;line-height:14.5px;color:#333;transform:scaleX(0.86)">11</div><div class="t" style="left:0.5px;width:28px;text-align:center;top:741.7px;font-size:14.5px;line-height:14.5px;color:#333;transform:scaleX(0.86)">12</div><div class="t" style="left:0.5px;width:28px;text-align:center;top:804.7px;font-size:14.5px;line-height:14.5px;color:#333;transform:scaleX(0.86)">13</div><div class="t" style="left:76.5px;width:120px;text-align:center;top:284.98px;font-size:11.6px;line-height:11.6px;color:#333;font-weight:bold;letter-spacing:0.5px">Icon</div><div class="t" style="left:247.7px;top:284.98px;font-size:11.6px;line-height:11.6px;color:#333;font-weight:bold;letter-spacing:0.5px;">Name</div><div class="t" style="left:456.5px;top:284.98px;font-size:11.6px;line-height:11.6px;color:#333;font-weight:bold;letter-spacing:0.5px;">Article no.</div><div class="t" style="left:527.5px;width:120px;text-align:center;top:284.98px;font-size:11.6px;line-height:11.6px;color:#333;font-weight:bold;letter-spacing:0.5px">Count</div><div class="t" style="left:247.5px;top:315.05px;font-size:14px;line-height:14px;color:#1f6fd0;font-weight:normal;letter-spacing:0px;text-decoration:underline;text-underline-offset:1px;text-decoration-skip-ink:none">&nbsp;Batteriestab gr rt 4,5V</div><div class="t" style="left:456.3px;top:316.69px;font-size:11px;line-height:11px;color:#333;font-weight:normal;letter-spacing:0.8px;">1967: 31041</div><div class="t" style="left:567.5px;width:40px;text-align:center;top:316.69px;font-size:11px;line-height:11px;color:#333">1</div><div class="t" style="left:247.5px;top:366.45px;font-size:14px;line-height:14px;color:#1f6fd0;font-weight:normal;letter-spacing:0px;text-decoration:underline;text-underline-offset:1px;text-decoration-skip-ink:none">&nbsp;Box 189x131x40 mot1 (grau)</div><div class="t" style="left:456.3px;top:368.99px;font-size:11px;line-height:11px;color:#333;font-weight:normal;letter-spacing:0.8px;">1975: 37393</div><div class="t" style="left:567.5px;width:40px;text-align:center;top:368.99px;font-size:11px;line-height:11px;color:#333">1</div><div class="t" style="left:247.5px;top:429.65px;font-size:14px;line-height:14px;color:#1f6fd0;font-weight:normal;letter-spacing:0px;text-decoration:underline;text-underline-offset:1px;text-decoration-skip-ink:none">&nbsp;Feder-Gelenkstein 45 (grau)</div><div class="t" style="left:456.3px;top:431.99px;font-size:11px;line-height:11px;color:#333;font-weight:normal;letter-spacing:0.8px;">1968: 31308</div><div class="t" style="left:567.5px;width:40px;text-align:center;top:431.99px;font-size:11px;line-height:11px;color:#333">1</div><div class="t" style="left:247.5px;top:491.95px;font-size:14px;line-height:14px;color:#1f6fd0;font-weight:normal;letter-spacing:0px;text-decoration:underline;text-underline-offset:1px;text-decoration-skip-ink:none">&nbsp;Flachnabe 25 komplett (rot)</div><div class="t" style="left:456.3px;top:494.49px;font-size:11px;line-height:11px;color:#333;font-weight:normal;letter-spacing:0.8px;">1966: 31015</div><div class="t" style="left:567.5px;width:40px;text-align:center;top:494.49px;font-size:11px;line-height:11px;color:#333">1</div><div class="t" style="left:247.5px;top:554.85px;font-size:14px;line-height:14px;color:#1f6fd0;font-weight:normal;letter-spacing:0px;text-decoration:underline;text-underline-offset:1px;text-decoration-skip-ink:none">&nbsp;Getriebeadapter 32x30 (rot)</div><div class="t" style="left:456.3px;top:557.19px;font-size:11px;line-height:11px;color:#333;font-weight:normal;letter-spacing:0.8px;">1975: 38203</div><div class="t" style="left:567.5px;width:40px;text-align:center;top:557.19px;font-size:11px;line-height:11px;color:#333">1</div><div class="t" style="left:247.5px;top:607.25px;font-size:14px;line-height:14px;color:#1f6fd0;font-weight:normal;letter-spacing:0px;text-decoration:underline;text-underline-offset:1px;text-decoration-skip-ink:none">&nbsp;Getriebehalter 50 (rot)</div><div class="t" style="left:456.3px;top:597.99px;font-size:11px;line-height:11px;color:#333;font-weight:normal;letter-spacing:0.8px;">1975: 31046</div><div class="t" style="left:456.3px;top:618.89px;font-size:11px;line-height:11px;color:#333;font-weight:normal;letter-spacing:0.8px;">1977: &mdash;</div><div class="t" style="left:567.5px;width:40px;text-align:center;top:608.59px;font-size:11px;line-height:11px;color:#333">1</div><div class="t" style="left:247.5px;top:649.55px;font-size:14px;line-height:14px;color:#1f6fd0;font-weight:normal;letter-spacing:0px;text-decoration:underline;text-underline-offset:1px;text-decoration-skip-ink:none">&nbsp;Getriebehalter 80 (rot)</div><div class="t" style="left:456.3px;top:640.09px;font-size:11px;line-height:11px;color:#333;font-weight:normal;letter-spacing:0.8px;">1975: 38201</div><div class="t" style="left:456.3px;top:660.99px;font-size:11px;line-height:11px;color:#333;font-weight:normal;letter-spacing:0.8px;">1977: &mdash;</div><div class="t" style="left:567.5px;width:40px;text-align:center;top:650.39px;font-size:11px;line-height:11px;color:#333">1</div><div class="t" style="left:247.5px;top:701.30px;font-size:13.7px;line-height:13.7px;color:#1f6fd0;font-weight:normal;letter-spacing:0px;text-decoration:underline;text-underline-offset:1px;text-decoration-skip-ink:none">&nbsp;Getriebehalter + Schnecke m1,5&nbsp;</div><div class="t" style="left:247.7px;top:721.95px;font-size:14px;line-height:14px;color:#1f6fd0;font-weight:normal;letter-spacing:0px;text-decoration:underline;text-underline-offset:1px;text-decoration-skip-ink:none">gr (rot)</div><div class="t" style="left:456.3px;top:702.79px;font-size:11px;line-height:11px;color:#333;font-weight:normal;letter-spacing:0.8px;">1975: 31045</div><div class="t" style="left:456.3px;top:743.19px;font-size:11px;line-height:11px;color:#333;font-weight:normal;letter-spacing:0.8px;">1977: &mdash;</div><div class="t" style="left:567.5px;width:40px;text-align:center;top:713.09px;font-size:11px;line-height:11px;color:#333">1</div><div class="t" style="left:247.5px;top:784.15px;font-size:14px;line-height:14px;color:#1f6fd0;font-weight:normal;letter-spacing:0px;text-decoration:underline;text-underline-offset:1px;text-decoration-skip-ink:none">&nbsp;Kabel 1000 bl bl +rt gn lang</div><div class="t" style="left:456.3px;top:786.39px;font-size:11px;line-height:11px;color:#333;font-weight:normal;letter-spacing:0.8px;">1971: 37170</div><div class="t" style="left:567.5px;width:40px;text-align:center;top:786.39px;font-size:11px;line-height:11px;color:#333">1</div><div style="position:absolute;left:29px;top:300.5px;width:107px;height:535.5px;background:#fff"></div><svg style="position:absolute;left:29px;top:299px" width="107" height="537" viewBox="29 299 107 537"><polygon points="32,327 114,316 132,319.5 37,333" fill="#c9c9c9"/><polygon points="37,333 132,319.5 132,334 100,342 37,342" fill="#b5b5b5"/><polygon points="32,327 37,333 37,342 32,342" fill="#8c8c8c"/><line x1="37" y1="333" x2="132" y2="319.5" stroke="#a8a8a8" stroke-width="0.6"/><ellipse cx="123" cy="318.6" rx="2.8" ry="1.5" fill="#e0001a"/><rect x="111" y="322.5" width="4" height="1.3" fill="#666"/><polygon points="45.4,369.8 92.2,355.6 118.6,367.6 118.6,379 71.6,393.4 45.4,381.4" fill="#c6c6c6" stroke="#333" stroke-width="0.8" stroke-linejoin="round"/><polyline points="45.4,369.8 71.6,381.4 118.6,367.6" fill="none" stroke="#333" stroke-width="0.8"/><line x1="71.6" y1="381.4" x2="71.6" y2="393.4" stroke="#333" stroke-width="0.8"/><polyline points="61,376 92.2,367.4 103,372" fill="none" stroke="#333" stroke-width="0.7"/><line x1="92.2" y1="355.6" x2="92.2" y2="367.4" stroke="#333" stroke-width="0.7"/><ellipse cx="85.4" cy="419.7" rx="12" ry="5" fill="#d2d2d2" stroke="#4a4a4a" stroke-width="0.8"/><ellipse cx="84.5" cy="419.5" rx="6" ry="2.4" fill="none" stroke="#4a4a4a" stroke-width="0.7"/><polygon points="44.2,425.5 73.6,417.6 82,424.5 82,427.2 61,430.2" fill="#d2d2d2" stroke="#4a4a4a" stroke-width="0.8" stroke-linejoin="round"/><polygon points="61,430.2 82,427.2 82,452 61,457.5" fill="#c6c6c6" stroke="#4a4a4a" stroke-width="0.8"/><polygon points="44.2,425.5 61,430.2 61,457.5 44.2,452.5" fill="#d2d2d2" stroke="#4a4a4a" stroke-width="0.8"/><polyline points="44.2,439 61,443 82,439.5" fill="none" stroke="#4a4a4a" stroke-width="0.8"/><polyline points="44.2,441.5 61,445.5 82,442" fill="none" stroke="#4a4a4a" stroke-width="0.8"/><line x1="65" y1="431" x2="65" y2="456.5" stroke="#4a4a4a" stroke-width="0.6"/><line x1="57.5" y1="424.5" x2="70" y2="421" stroke="#333" stroke-width="1.6"/><polygon points="82,427.2 100.5,421 119,428 98.8,434.4" fill="#d2d2d2" stroke="#4a4a4a" stroke-width="0.8" stroke-linejoin="round"/><polygon points="82,427.2 98.8,434.4 98.8,458.7 82,452" fill="#c6c6c6" stroke="#4a4a4a" stroke-width="0.8"/><polygon points="98.8,434.4 119,428 119,452 98.8,458.7" fill="#d2d2d2" stroke="#4a4a4a" stroke-width="0.8"/><polyline points="82,439.5 98.8,446.5 119,440" fill="none" stroke="#4a4a4a" stroke-width="0.8"/><polyline points="82,442 98.8,449 119,442.5" fill="none" stroke="#4a4a4a" stroke-width="0.8"/><line x1="102.5" y1="433.5" x2="102.5" y2="457.5" stroke="#4a4a4a" stroke-width="0.6"/><line x1="93" y1="425.5" x2="105" y2="429.5" stroke="#333" stroke-width="1.6"/><circle cx="49.8" cy="441.5" r="4.2" fill="#2a2a2a"/><circle cx="49.8" cy="441.5" r="5.5" fill="none" stroke="#222" stroke-width="1.4" stroke-dasharray="1.2 1.6"/><circle cx="110.8" cy="444.2" r="4.6" fill="#2a2a2a"/><circle cx="110.8" cy="444.2" r="5.8999999999999995" fill="none" stroke="#222" stroke-width="1.4" stroke-dasharray="1.2 1.6"/><ellipse cx="82.3" cy="507.5" rx="22.5" ry="8.5" fill="#f40000" stroke="#3a0000" stroke-width="0.75"/><rect x="59.8" y="501" width="45" height="6.5" fill="#f40000"/><ellipse cx="82.3" cy="504.5" rx="22.5" ry="7.5" fill="none" stroke="#3a0000" stroke-width="0.75"/><ellipse cx="82.3" cy="500.8" rx="22.5" ry="7.2" fill="#f40000" stroke="#3a0000" stroke-width="0.75"/><polygon points="87,491 97,495 98,504 88,503" fill="#f40000" stroke="#3a0000" stroke-width="0.75"/><path d="M70 488 L72 503 Q82 507 91 503 L93 488 Z" fill="#f40000" stroke="#3a0000" stroke-width="0.75"/><polygon points="66.5,485 72,483.5 74,490 67,492" fill="#f40000" stroke="#3a0000" stroke-width="0.75"/><ellipse cx="81.5" cy="487.5" rx="11" ry="3.5" fill="#f40000" stroke="#3a0000" stroke-width="0.75"/><ellipse cx="82" cy="487.5" rx="3.5" ry="1.5" fill="none" stroke="#3a0000" stroke-width="0.75"/><polygon points="56.8,547 99.4,534.4 121.6,544 121.6,578.2 82,590.2 82,556" fill="#fff" stroke="#777" stroke-width="0.6"/><polyline points="56.8,547 82,556 121.6,544" fill="none" stroke="#777" stroke-width="0.6"/><circle cx="95" cy="537.5" r="0.9" fill="none" stroke="#777" stroke-width="0.5"/><circle cx="114" cy="546" r="0.9" fill="none" stroke="#777" stroke-width="0.5"/><ellipse cx="45.0" cy="576.5" rx="2.6" ry="5.8" transform="rotate(-18 45.0 576.5)" fill="#e4e4e4" stroke="#606060" stroke-width="0.75"/><ellipse cx="48.6" cy="575.2" rx="2.6" ry="5.8" transform="rotate(-18 48.6 575.2)" fill="#e4e4e4" stroke="#606060" stroke-width="0.75"/><ellipse cx="52.2" cy="573.9" rx="2.6" ry="5.8" transform="rotate(-18 52.2 573.9)" fill="#e4e4e4" stroke="#606060" stroke-width="0.75"/><ellipse cx="55.8" cy="572.6" rx="2.6" ry="5.8" transform="rotate(-18 55.8 572.6)" fill="#e4e4e4" stroke="#606060" stroke-width="0.75"/><ellipse cx="59.4" cy="571.3" rx="2.6" ry="5.8" transform="rotate(-18 59.4 571.3)" fill="#e4e4e4" stroke="#606060" stroke-width="0.75"/><ellipse cx="63.0" cy="570.0" rx="2.6" ry="5.8" transform="rotate(-18 63.0 570.0)" fill="#e4e4e4" stroke="#606060" stroke-width="0.75"/><ellipse cx="66.6" cy="568.7" rx="2.6" ry="5.8" transform="rotate(-18 66.6 568.7)" fill="#e4e4e4" stroke="#606060" stroke-width="0.75"/><ellipse cx="70.2" cy="567.4" rx="2.6" ry="5.8" transform="rotate(-18 70.2 567.4)" fill="#e4e4e4" stroke="#606060" stroke-width="0.75"/><ellipse cx="44.5" cy="577" rx="2" ry="4.5" transform="rotate(-18 44.5 577)" fill="#f6f6f6" stroke="#777" stroke-width="0.7"/><ellipse cx="44.5" cy="577" rx="0.9" ry="2" transform="rotate(-18 44.5 577)" fill="none" stroke="#777" stroke-width="0.5"/><path d="M56.8,547 L82,556 L82,590.8 L70.6,587.5 L70.6,580 L75.4,581.5 L75.4,559 L61,553.6 L61,576.5 L66.4,578 L66.4,583.6 L56.8,580.5 Z" fill="#ee0000" stroke="#8a0000" stroke-width="0.5"/><path d="M58.5,552 L75.5,558" stroke="#7a0000" stroke-width="1.3"/><polygon points="61,553.6 75.4,559 75.4,562 64.5,558 64.5,577.5 61,576.5" fill="#c80000"/><path d="M75.4,559 L82,556" stroke="#a00" stroke-width="0.5"/><line x1="44.8" y1="545.2" x2="54.5" y2="554" stroke="#2233ee" stroke-width="0.9"/><polygon points="56,555.3 51.5,554.5 54.5,551" fill="#2233ee"/><line x1="79.8" y1="617.8" x2="106.8" y2="609.4" stroke="#6e6e6e" stroke-width="3.6" stroke-linecap="round"/><line x1="79.8" y1="616.9" x2="106.8" y2="608.5" stroke="#9a9a9a" stroke-width="0.8"/><polygon points="70.0,626.8 83.8,626.2 90.4,628.6 90.4,634.6 70.0,634.6" fill="#d0d0d0" stroke="#8a8a8a" stroke-width="0.5"/><polygon points="77.2,611.4 82.0,614.2 82.0,632.0 77.2,633.0" fill="#d4d4d4" stroke="#8a8a8a" stroke-width="0.5"/><polygon points="64.8,613.0 74.8,610.5 80.3,618.5 79.8,630.0 71.3,632.5 68.8,620.0" fill="#6a0000"/><ellipse cx="68.3" cy="612.8" rx="5.2" ry="1.9" transform="rotate(-18 68.3 612.8)" fill="#f40000" stroke="#4a0000" stroke-width="0.4"/><ellipse cx="73.0" cy="616.2" rx="5.2" ry="1.9" transform="rotate(-18 73.0 616.2)" fill="#f40000" stroke="#4a0000" stroke-width="0.4"/><ellipse cx="74.6" cy="620.6" rx="5.2" ry="1.9" transform="rotate(-18 74.6 620.6)" fill="#f40000" stroke="#4a0000" stroke-width="0.4"/><ellipse cx="74.6" cy="625.2" rx="5.2" ry="1.9" transform="rotate(-18 74.6 625.2)" fill="#f40000" stroke="#4a0000" stroke-width="0.4"/><ellipse cx="73.3" cy="629.6" rx="5.2" ry="1.9" transform="rotate(-18 73.3 629.6)" fill="#f40000" stroke="#4a0000" stroke-width="0.4"/><polygon points="64.0,616.0 70.0,614.8 70.0,634.6 64.0,634.6" fill="#dadada" stroke="#8a8a8a" stroke-width="0.5"/><polygon points="56.8,616.0 64.0,616.0 64.0,634.6 56.8,634.6" fill="#cbcbcb" stroke="#8a8a8a" stroke-width="0.5"/><polygon points="56.8,616.0 62.8,614.7 70.0,614.8 64.0,616.0" fill="#e6e6e6" stroke="#8a8a8a" stroke-width="0.5"/><circle cx="60.4" cy="623.2" r="2.1" fill="none" stroke="#8a8a8a" stroke-width="0.7"/><circle cx="60.4" cy="628.6" r="2.1" fill="none" stroke="#8a8a8a" stroke-width="0.7"/><text x="84.8" y="610.4" font-family="Liberation Sans" font-size="10.2" fill="#555" transform="rotate(-16 90 606)">50</text><line x1="45.900000000000006" y1="674.8" x2="71.4" y2="666.8" stroke="#6e6e6e" stroke-width="3.6" stroke-linecap="round"/><line x1="45.900000000000006" y1="673.9" x2="71.4" y2="665.9" stroke="#9a9a9a" stroke-width="0.8"/><line x1="92.4" y1="660.0999999999999" x2="119.4" y2="651.6999999999999" stroke="#6e6e6e" stroke-width="3.6" stroke-linecap="round"/><line x1="92.4" y1="659.1999999999999" x2="119.4" y2="650.8" stroke="#9a9a9a" stroke-width="0.8"/><polygon points="82.6,669.1 96.4,668.5 103.0,670.9 103.0,676.9 82.6,676.9" fill="#d0d0d0" stroke="#8a8a8a" stroke-width="0.5"/><polygon points="89.8,653.7 94.6,656.5 94.6,674.3 89.8,675.3" fill="#d4d4d4" stroke="#8a8a8a" stroke-width="0.5"/><polygon points="77.4,655.3 87.4,652.8 92.9,660.8 92.4,672.3 83.9,674.8 81.4,662.3" fill="#6a0000"/><ellipse cx="80.9" cy="655.1" rx="5.2" ry="1.9" transform="rotate(-18 80.9 655.1)" fill="#f40000" stroke="#4a0000" stroke-width="0.4"/><ellipse cx="85.6" cy="658.5" rx="5.2" ry="1.9" transform="rotate(-18 85.6 658.5)" fill="#f40000" stroke="#4a0000" stroke-width="0.4"/><ellipse cx="87.2" cy="662.9" rx="5.2" ry="1.9" transform="rotate(-18 87.2 662.9)" fill="#f40000" stroke="#4a0000" stroke-width="0.4"/><ellipse cx="87.2" cy="667.5" rx="5.2" ry="1.9" transform="rotate(-18 87.2 667.5)" fill="#f40000" stroke="#4a0000" stroke-width="0.4"/><ellipse cx="85.9" cy="671.9" rx="5.2" ry="1.9" transform="rotate(-18 85.9 671.9)" fill="#f40000" stroke="#4a0000" stroke-width="0.4"/><polygon points="76.6,658.3 82.6,657.1 82.6,676.9 76.6,676.9" fill="#dadada" stroke="#8a8a8a" stroke-width="0.5"/><polygon points="69.4,658.3 76.6,658.3 76.6,676.9 69.4,676.9" fill="#cbcbcb" stroke="#8a8a8a" stroke-width="0.5"/><polygon points="69.4,658.3 75.4,657.0 82.6,657.1 76.6,658.3" fill="#e6e6e6" stroke="#8a8a8a" stroke-width="0.5"/><circle cx="73.0" cy="665.5" r="2.1" fill="none" stroke="#8a8a8a" stroke-width="0.7"/><circle cx="73.0" cy="670.9" r="2.1" fill="none" stroke="#8a8a8a" stroke-width="0.7"/><text x="97.3" y="652.8" font-family="Liberation Sans" font-size="10.2" fill="#555" transform="rotate(-16 102 648.5)">80</text><polygon points="80,701 104,692 106,700 81,713" fill="#5a0000"/><ellipse cx="80.5" cy="707.0" rx="2.7" ry="10.00" transform="rotate(-12 80.5 707.0)" fill="#ee0000" stroke="#4a0000" stroke-width="0.6"/><ellipse cx="84.7" cy="705.4" rx="2.7" ry="9.65" transform="rotate(-12 84.7 705.4)" fill="#ee0000" stroke="#4a0000" stroke-width="0.6"/><ellipse cx="88.9" cy="703.8" rx="2.7" ry="9.30" transform="rotate(-12 88.9 703.8)" fill="#ee0000" stroke="#4a0000" stroke-width="0.6"/><ellipse cx="93.1" cy="702.2" rx="2.7" ry="8.95" transform="rotate(-12 93.1 702.2)" fill="#ee0000" stroke="#4a0000" stroke-width="0.6"/><ellipse cx="97.3" cy="700.6" rx="2.7" ry="8.60" transform="rotate(-12 97.3 700.6)" fill="#ee0000" stroke="#4a0000" stroke-width="0.6"/><ellipse cx="101.5" cy="699.0" rx="2.7" ry="8.25" transform="rotate(-12 101.5 699.0)" fill="#ee0000" stroke="#4a0000" stroke-width="0.6"/><ellipse cx="105.7" cy="697.4" rx="2.7" ry="7.90" transform="rotate(-12 105.7 697.4)" fill="#ee0000" stroke="#4a0000" stroke-width="0.6"/><polygon points="54.4,703.6 60,701.8 66,703.6 66,720.5 79.5,716.5 79.5,714.5 87.4,716 87.4,722 61,730 54.4,728" fill="#c4c4c4" stroke="#444" stroke-width="0.5"/><polygon points="54.4,703.6 60,701.8 66,703.6 61,705.4" fill="#e4e4e4" stroke="#444" stroke-width="0.4"/><line x1="61" y1="705.4" x2="61" y2="730" stroke="#444" stroke-width="0.5"/><circle cx="57.6" cy="710.5" r="1.5" fill="none" stroke="#444" stroke-width="0.5"/><circle cx="57.6" cy="716" r="1.5" fill="none" stroke="#444" stroke-width="0.5"/><circle cx="57.6" cy="725" r="1" fill="none" stroke="#444" stroke-width="0.5"/><polygon points="63,699 68,697 74,698 78,700 78,714 75,718 66,720 66,703.6" fill="#ee0000" stroke="#600" stroke-width="0.5"/><path d="M66 704 L78 702 M66 709 L78 707 M66 714 L78 712" stroke="#700" stroke-width="0.7"/><text x="113.5" y="736.5" font-family="Liberation Sans" font-size="9" fill="#222" letter-spacing="-0.3">10:1</text><path d="M47.8,799.2C53,799 56,798.5 61,797.6L101.8,785.9C106,784 110,781.5 114.4,779" fill="none" stroke="#1a5cff" stroke-width="1.6"/><path d="M49.6,806C53,802.5 56.5,799.5 61,797.6M101.8,785.9C106,785.5 111,785.5 116.2,785.6" fill="none" stroke="#1a5cff" stroke-width="1.6"/><path d="M61,797.6L101.8,785.9" fill="none" stroke="#1a5cff" stroke-width="2.8"/><line x1="32.8" y1="798.6" x2="37.6" y2="798.8" stroke="#777" stroke-width="2.4"/><line x1="37.6" y1="798.8" x2="47.8" y2="799.3" stroke="#333" stroke-width="3.4"/><line x1="39" y1="798.9" x2="46.5" y2="799.2" stroke="#e00" stroke-width="2"/><line x1="37.6" y1="814" x2="40.5" y2="812" stroke="#777" stroke-width="2.4"/><line x1="40.5" y1="812" x2="49.6" y2="806" stroke="#333" stroke-width="3.4"/><line x1="41.5" y1="811.3" x2="48.5" y2="806.7" stroke="#0a0" stroke-width="2"/><line x1="114.4" y1="779" x2="121.6" y2="773.3" stroke="#333" stroke-width="3.4"/><line x1="115.4" y1="778.2" x2="120.6" y2="774.1" stroke="#e00" stroke-width="2"/><line x1="121.6" y1="773.3" x2="126.4" y2="770" stroke="#777" stroke-width="2.4"/><line x1="116.2" y1="785.6" x2="126" y2="785.8" stroke="#333" stroke-width="3.4"/><line x1="117.2" y1="785.6" x2="125" y2="785.8" stroke="#0a0" stroke-width="2"/><line x1="126" y1="785.8" x2="131.2" y2="785.9" stroke="#777" stroke-width="2.4"/><text x="68.8" y="786" font-family="Liberation Sans" font-size="9" fill="#484848" transform="rotate(-15 78 781)">1000</text></svg><div style="position:absolute;left:720px;top:404px;width:91.5px;height:64.5px;border:2px solid #217346;box-sizing:border-box"></div><div style="position:absolute;left:806.5px;top:465.5px;width:6px;height:6px;background:#217346;border:1px solid #fff;box-sizing:border-box"></div><div style="position:absolute;left:0px;top:836px;width:1000px;height:25px;background:#e6e6e6;border-top:1px solid #a6a6a6;box-sizing:border-box"></div><svg style="position:absolute;left:23px;top:844px" width="6" height="9" viewBox="0 0 6 9"><path d="M5 0.5v8L0.5 4.5z" fill="#c0c0c0"/></svg><svg style="position:absolute;left:48px;top:844px" width="6" height="9" viewBox="0 0 6 9"><path d="M1 0.5v8L5.5 4.5z" fill="#c0c0c0"/></svg><div style="position:absolute;left:88.5px;top:840px;width:1.6px;height:17.5px;background:#bcbcbc"></div><div class="t" style="left:101.5px;top:839.28px;font-size:14.2px;line-height:14.2px;color:#444;font-weight:normal;letter-spacing:0px;">Tabelle1</div><div style="position:absolute;left:167.5px;top:836px;width:79px;height:22px;background:#fff;border-left:1px solid #b8b8b8;border-right:1px solid #b8b8b8;box-sizing:border-box"></div><div style="position:absolute;left:167.5px;top:856px;width:79px;height:2px;background:#217346"></div><div class="t" style="left:178.6px;top:839.28px;font-size:14.2px;line-height:14.2px;color:#217346;font-weight:bold;letter-spacing:0px;">Tabelle2</div><svg style="position:absolute;left:275px;top:840px" width="18" height="18" viewBox="0 0 18 18"><circle cx="9" cy="9" r="7.5" fill="none" stroke="#666" stroke-width="1.2"/><path d="M9 4.5v9M4.5 9h9" stroke="#666" stroke-width="1.2"/></svg><svg style="position:absolute;left:987px;top:843px" width="4" height="12" viewBox="0 0 4 12"><rect x="0.2" y="0.2" width="2.6" height="2.4" fill="#a8a8a8"/><rect x="0.2" y="4.4" width="2.6" height="2.4" fill="#a8a8a8"/><rect x="0.2" y="8.6" width="2.6" height="2.4" fill="#a8a8a8"/></svg>
</body></html>
